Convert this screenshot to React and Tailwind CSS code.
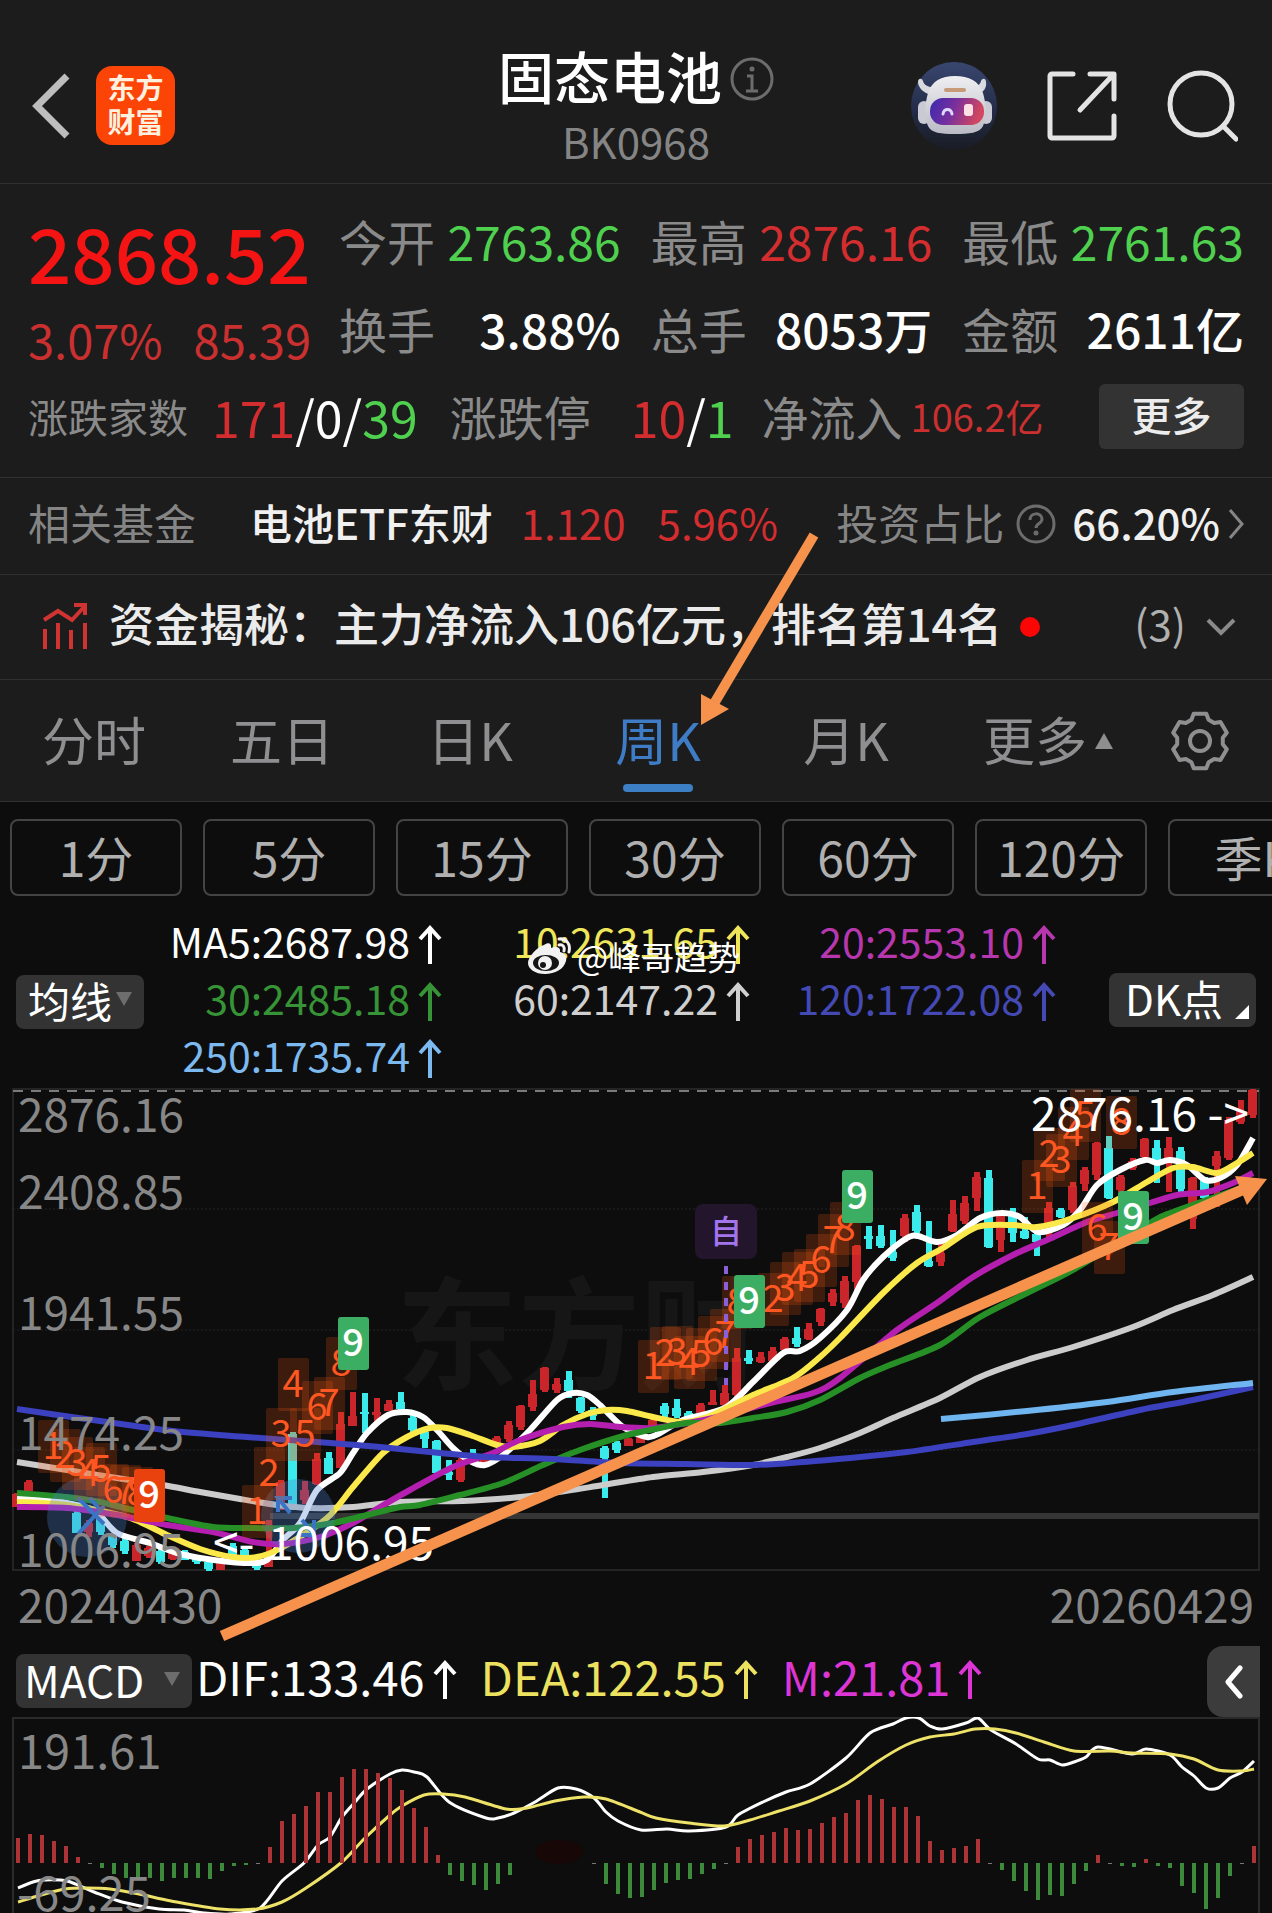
import React from "react";

const FONT = "font-['Noto_Sans_CJK_SC','Noto_Sans',sans-serif]";

/* ---------- helpers ---------- */

// Smooth curve through a flat list of x, y values.
function curve(v) {
  const p = [];
  for (let i = 0; i < v.length; i += 2) p.push([v[i], v[i + 1]]);
  let d = `M${p[0][0]} ${p[0][1]}`;
  for (let i = 0; i < p.length - 1; i++) {
    const a = p[i - 1] || p[i];
    const b = p[i];
    const c = p[i + 1];
    const e = p[i + 2] || c;
    const f = (n) => n.toFixed(1);
    d += `C${f(b[0] + (c[0] - a[0]) / 7)} ${f(b[1] + (c[1] - a[1]) / 7)} ${f(c[0] - (e[0] - b[0]) / 7)} ${f(c[1] - (e[1] - b[1]) / 7)} ${c[0]} ${c[1]}`;
  }
  return d;
}

/* ---------- data ---------- */

// [x, wick top, body top, body bottom, wick bottom, rising]
const CANDLES = [
  [17, 1493, 1494, 1507, 1507, 1], [29, 1480, 1482, 1491, 1491, 1], [53, 1500, 1502, 1506, 1506, 0],
  [77, 1511, 1513, 1533, 1533, 0], [89, 1520, 1523, 1532, 1537, 1], [101, 1516, 1519, 1532, 1535, 0],
  [113, 1535, 1535, 1545, 1548, 0], [125, 1538, 1541, 1551, 1554, 0], [137, 1543, 1545, 1561, 1561, 1],
  [149, 1546, 1548, 1556, 1558, 1], [161, 1548, 1551, 1562, 1564, 0], [173, 1551, 1552, 1559, 1560, 1],
  [185, 1550, 1552, 1560, 1560, 0], [197, 1555, 1556, 1562, 1564, 0], [209, 1560, 1562, 1569, 1571, 0],
  [221, 1560, 1562, 1570, 1570, 1], [233, 1543, 1546, 1557, 1557, 0], [245, 1549, 1550, 1557, 1557, 0],
  [257, 1560, 1561, 1568, 1570, 0], [269, 1520, 1555, 1567, 1567, 1], [281, 1480, 1482, 1510, 1510, 1],
  [293, 1432, 1434, 1510, 1510, 0], [305, 1481, 1490, 1500, 1504, 1], [317, 1453, 1459, 1484, 1485, 1],
  [329, 1452, 1458, 1474, 1474, 0], [341, 1412, 1424, 1468, 1468, 1], [353, 1392, 1416, 1426, 1426, 1],
  [365, 1393, 1412, 1414, 1433, 0], [377, 1398, 1412, 1415, 1425, 1], [389, 1400, 1404, 1411, 1411, 1],
  [401, 1392, 1402, 1409, 1410, 0], [413, 1415, 1418, 1430, 1434, 0], [425, 1430, 1432, 1439, 1448, 0],
  [437, 1440, 1441, 1473, 1473, 0], [449, 1460, 1472, 1475, 1480, 0], [461, 1458, 1460, 1480, 1482, 1],
  [473, 1449, 1453, 1460, 1462, 0], [485, 1455, 1457, 1462, 1464, 1], [497, 1436, 1438, 1446, 1447, 1],
  [509, 1421, 1425, 1439, 1442, 1], [521, 1405, 1406, 1427, 1430, 1], [533, 1380, 1394, 1407, 1411, 1],
  [545, 1367, 1368, 1390, 1392, 1], [557, 1378, 1384, 1390, 1393, 1], [569, 1371, 1380, 1391, 1398, 0],
  [581, 1397, 1398, 1411, 1413, 0], [593, 1407, 1410, 1416, 1420, 0], [605, 1446, 1448, 1458, 1498, 0],
  [617, 1441, 1443, 1450, 1453, 0], [629, 1438, 1439, 1446, 1446, 1], [641, 1436, 1437, 1443, 1443, 1],
  [653, 1419, 1420, 1430, 1430, 1], [665, 1403, 1406, 1414, 1417, 0], [677, 1399, 1408, 1416, 1418, 0],
  [689, 1411, 1413, 1418, 1418, 0], [701, 1403, 1405, 1413, 1413, 1], [713, 1390, 1402, 1405, 1405, 1],
  [725, 1385, 1393, 1405, 1407, 1], [737, 1348, 1358, 1395, 1397, 1], [749, 1350, 1358, 1361, 1364, 0],
  [761, 1352, 1357, 1362, 1363, 1], [773, 1347, 1351, 1361, 1362, 1], [785, 1337, 1339, 1350, 1352, 1],
  [797, 1327, 1338, 1344, 1347, 0], [809, 1323, 1329, 1339, 1340, 1], [821, 1308, 1309, 1322, 1326, 1],
  [833, 1289, 1293, 1302, 1306, 1], [845, 1276, 1281, 1303, 1308, 1], [857, 1245, 1246, 1282, 1292, 1],
  [869, 1226, 1236, 1239, 1249, 0], [881, 1225, 1236, 1246, 1248, 0], [893, 1230, 1252, 1258, 1261, 0],
  [905, 1214, 1218, 1236, 1242, 1], [917, 1205, 1212, 1231, 1233, 0], [929, 1221, 1261, 1266, 1267, 0],
  [941, 1242, 1253, 1262, 1266, 1], [953, 1200, 1214, 1231, 1232, 1], [965, 1196, 1203, 1221, 1224, 1],
  [977, 1172, 1177, 1198, 1211, 1], [989, 1170, 1178, 1247, 1248, 0], [1001, 1213, 1216, 1240, 1252, 1],
  [1013, 1208, 1214, 1233, 1242, 0], [1025, 1217, 1231, 1238, 1239, 0], [1037, 1230, 1234, 1242, 1256, 0],
  [1049, 1202, 1208, 1233, 1239, 1], [1061, 1208, 1210, 1217, 1218, 0], [1073, 1182, 1186, 1210, 1213, 1],
  [1085, 1167, 1170, 1184, 1191, 1], [1097, 1142, 1143, 1175, 1180, 1], [1109, 1136, 1148, 1198, 1199, 0],
  [1121, 1175, 1177, 1190, 1192, 1], [1133, 1158, 1161, 1168, 1170, 1], [1145, 1138, 1139, 1157, 1158, 1],
  [1157, 1140, 1148, 1160, 1183, 0], [1169, 1137, 1148, 1162, 1192, 1], [1181, 1147, 1151, 1189, 1192, 0],
  [1193, 1177, 1178, 1219, 1229, 1], [1205, 1177, 1180, 1198, 1200, 0], [1217, 1151, 1156, 1166, 1207, 1],
  [1229, 1117, 1120, 1158, 1160, 1], [1241, 1100, 1111, 1122, 1124, 1], [1253, 1089, 1090, 1115, 1118, 1],
];

const MA_LINES = [
  ["#cccccc", [17, 1462, 67, 1470, 117, 1478, 163, 1485, 200, 1492, 240, 1499, 277, 1505, 310, 1508, 353, 1507, 400, 1502, 463, 1501, 510, 1498, 553, 1493, 603, 1485, 653, 1477, 703, 1472, 753, 1465, 787, 1457, 820, 1448, 860, 1433, 893, 1418, 940, 1398, 980, 1377, 1027, 1360, 1073, 1347, 1133, 1327, 1173, 1310, 1213, 1295, 1253, 1277]],
  ["#ffffff", [17, 1498, 50, 1500, 93, 1510, 117, 1533, 150, 1543, 177, 1553, 207, 1559, 247, 1563, 267, 1560, 283, 1540, 300, 1523, 317, 1490, 340, 1473, 353, 1453, 367, 1433, 388, 1415, 407, 1412, 423, 1417, 437, 1430, 453, 1448, 470, 1461, 485, 1465, 503, 1455, 530, 1430, 557, 1400, 573, 1393, 587, 1395, 600, 1405, 623, 1427, 647, 1437, 660, 1433, 683, 1420, 725, 1408, 753, 1382, 783, 1353, 800, 1351, 820, 1338, 847, 1310, 863, 1280, 883, 1257, 907, 1238, 918, 1236, 937, 1242, 957, 1235, 980, 1218, 1002, 1213, 1020, 1217, 1038, 1232, 1063, 1225, 1080, 1210, 1097, 1185, 1120, 1170, 1145, 1160, 1157, 1163, 1170, 1160, 1187, 1165, 1205, 1180, 1220, 1178, 1237, 1165, 1253, 1138]],
  ["#fbe94b", [17, 1502, 67, 1505, 127, 1517, 167, 1535, 200, 1549, 233, 1557, 257, 1557, 283, 1547, 327, 1518, 353, 1487, 383, 1453, 407, 1437, 430, 1428, 447, 1428, 470, 1435, 497, 1445, 513, 1447, 540, 1441, 563, 1425, 587, 1414, 607, 1410, 627, 1411, 653, 1417, 683, 1422, 707, 1417, 727, 1408, 753, 1395, 793, 1378, 820, 1357, 840, 1338, 883, 1293, 917, 1263, 943, 1248, 977, 1227, 1013, 1225, 1037, 1227, 1073, 1218, 1113, 1202, 1147, 1182, 1173, 1168, 1193, 1167, 1217, 1173, 1237, 1163, 1253, 1153]],
  ["#b51fb0", [17, 1507, 67, 1508, 117, 1515, 167, 1525, 213, 1532, 253, 1542, 283, 1544, 320, 1537, 353, 1523, 380, 1507, 410, 1490, 453, 1467, 493, 1453, 520, 1440, 563, 1427, 590, 1424, 620, 1427, 653, 1428, 687, 1423, 713, 1418, 770, 1403, 813, 1393, 840, 1378, 897, 1330, 937, 1303, 973, 1277, 1013, 1255, 1047, 1240, 1087, 1222, 1117, 1213, 1150, 1203, 1177, 1195, 1207, 1192, 1233, 1183, 1253, 1173]],
  ["#269026", [17, 1493, 67, 1497, 100, 1502, 133, 1510, 167, 1518, 213, 1527, 253, 1528, 293, 1528, 333, 1523, 367, 1515, 400, 1507, 420, 1505, 460, 1495, 503, 1483, 543, 1465, 580, 1450, 627, 1435, 660, 1428, 687, 1423, 720, 1423, 753, 1418, 787, 1412, 820, 1400, 860, 1378, 890, 1365, 940, 1345, 980, 1317, 1027, 1293, 1073, 1270, 1150, 1223, 1173, 1212, 1250, 1185]],
  ["#3b41bf", [17, 1409, 100, 1421, 173, 1431, 247, 1437, 317, 1442, 380, 1447, 440, 1453, 487, 1457, 553, 1459, 620, 1463, 687, 1464, 753, 1465, 803, 1462, 860, 1457, 907, 1452, 973, 1442, 1027, 1434, 1073, 1425, 1140, 1410, 1193, 1400, 1253, 1387]],
  ["#6fb5ef", [941, 1419, 1027, 1411, 1107, 1402, 1173, 1392, 1253, 1383]],
];

// Sequence counters: [digit, x, y]
const COUNTS = [
  [1, 53, 1446], [2, 65, 1455], [3, 77, 1463], [4, 89, 1473], [5, 101, 1469], [6, 113, 1490], [7, 125, 1491], [8, 137, 1493],
  [1, 257, 1511], [2, 269, 1473], [3, 281, 1434], [4, 293, 1384], [5, 305, 1434], [6, 317, 1407], [7, 329, 1403], [8, 341, 1363],
  [1, 653, 1366], [2, 665, 1353], [3, 677, 1352], [4, 689, 1362], [5, 701, 1354], [6, 713, 1342], [7, 725, 1335], [8, 737, 1302],
  [2, 773, 1299], [3, 785, 1288], [4, 797, 1278], [5, 809, 1275], [6, 821, 1260], [7, 833, 1240], [8, 845, 1228],
  [1, 1037, 1186], [2, 1049, 1154], [3, 1061, 1160], [4, 1073, 1133], [5, 1085, 1115], [6, 1097, 1228], [7, 1109, 1247], [8, 1121, 1122],
];
const NINES = [
  [149, 1496, "#e9420f"], [353, 1344, "#3cae63"], [749, 1302, "#3cae63"], [857, 1197, "#3cae63"], [1133, 1218, "#3cae63"],
];

const MACD_BARS = [
  25, 29, 28, 22, 17, 6, -1, -5, -11, -15, -16, -15, -18, -15, -15, -15, -16, -8, -3, -2, -1,
  16, 42, 49, 57, 71, 71, 86, 94, 94, 90, 85, 73, 55, 36, 8, -12, -18, -22, -27, -21, -12,
  0, 0, 0, 0, 0, 0, -1, -21, -31, -35, -34, -27, -20, -17, -16, -11, -6, -1,
  16, 24, 28, 31, 35, 33, 34, 40, 46, 50, 63, 68, 64, 56, 56, 47, 22, 13, 15, 17, 24,
  -1, -7, -18, -28, -37, -32, -33, -21, -8, 8, -1, -3, -4, 4, -3, -5, -23, -30, -46, -35, -13, -1, 17,
];
const DIF = [18, 1888, 33, 1882, 43, 1880, 67, 1881, 94, 1892, 122, 1902, 159, 1909, 184, 1910, 204, 1913, 230, 1914, 260, 1908, 282, 1881, 304, 1863, 318, 1845, 330, 1837, 342, 1817, 355, 1802, 367, 1789, 390, 1774, 402, 1770, 414, 1772, 427, 1777, 449, 1802, 486, 1818, 498, 1818, 514, 1813, 535, 1802, 558, 1788, 576, 1789, 594, 1798, 606, 1812, 618, 1821, 641, 1830, 667, 1829, 689, 1831, 726, 1827, 738, 1815, 763, 1802, 786, 1792, 810, 1784, 846, 1758, 870, 1733, 893, 1724, 906, 1718, 919, 1718, 930, 1726, 942, 1729, 966, 1723, 978, 1718, 991, 1730, 1016, 1744, 1038, 1759, 1050, 1760, 1062, 1765, 1074, 1762, 1086, 1757, 1098, 1747, 1132, 1754, 1146, 1749, 1170, 1755, 1182, 1767, 1194, 1776, 1206, 1788, 1218, 1788, 1230, 1778, 1242, 1772, 1254, 1761];
const DEA = [18, 1902, 41, 1895, 65, 1889, 86, 1888, 110, 1889, 139, 1894, 171, 1901, 220, 1909, 257, 1909, 282, 1902, 306, 1888, 342, 1862, 365, 1838, 390, 1815, 402, 1806, 424, 1795, 443, 1794, 465, 1797, 506, 1809, 527, 1808, 555, 1801, 584, 1797, 606, 1799, 640, 1812, 656, 1818, 689, 1823, 724, 1826, 750, 1820, 779, 1811, 810, 1801, 846, 1784, 877, 1762, 906, 1745, 930, 1737, 954, 1734, 975, 1729, 995, 1729, 1016, 1733, 1044, 1742, 1074, 1751, 1110, 1751, 1132, 1753, 1170, 1754, 1194, 1759, 1218, 1770, 1242, 1771, 1254, 1769];

/* ---------- icons ---------- */

function Robot() {
  return (
    <svg viewBox="0 0 88 90" className="h-[90px] w-[88px]" aria-hidden="true">
      <defs>
        <linearGradient id="sky" x1="0" y1="0" x2="0" y2="1">
          <stop offset="0" stopColor="#39466f" />
          <stop offset="0.55" stopColor="#232c48" />
          <stop offset="1" stopColor="#1a1c24" />
        </linearGradient>
        <linearGradient id="shell" x1="0" y1="0" x2="0" y2="1">
          <stop offset="0" stopColor="#efeff2" />
          <stop offset="1" stopColor="#b9bac4" />
        </linearGradient>
        <linearGradient id="visor" x1="0" y1="0" x2="1" y2="0.2">
          <stop offset="0" stopColor="#3a2bb0" />
          <stop offset="0.5" stopColor="#7a2f9c" />
          <stop offset="1" stopColor="#d2475f" />
        </linearGradient>
      </defs>
      <ellipse cx="44" cy="45" rx="43" ry="44" fill="url(#sky)" />
      <path d="M21 34C13 32 8 26 8 21c0-4 4-4 5-1 1 4 5 6 10 6zM66 34c8-2 11-8 10-13 0-4-4-4-5-1-1 4-5 6-9 6z" fill="#d9dae0" />
      <rect x="8" y="40" width="12" height="23" rx="6" fill="#c9cad3" />
      <rect x="70" y="40" width="12" height="23" rx="6" fill="#c9cad3" />
      <path d="M45 15c14 0 24 5 28 17 3 10 4 24 0 33-3 7-14 8-28 8s-24-1-27-8c-4-9-3-23 0-33 4-12 13-17 27-17z" fill="url(#shell)" />
      <rect x="34" y="27" width="22" height="4" rx="2" fill="#c79a78" />
      <rect x="20" y="37" width="54" height="27" rx="13" fill="url(#visor)" />
      <path d="M33 53c1-6 8-6 9 0" fill="none" stroke="#ded7ff" strokeWidth="3" strokeLinecap="round" />
      <rect x="54" y="43" width="9" height="12" rx="3" fill="#ffdfe6" />
    </svg>
  );
}

function Gear() {
  const pts = [];
  for (let i = 0; i < 6; i++) {
    [[-22, 23], [-13, 28], [13, 28], [22, 23]].forEach(([a, r]) => {
      const t = ((i * 60 + a) * Math.PI) / 180;
      pts.push(`${(31 + r * Math.sin(t)).toFixed(1)},${(31 - r * Math.cos(t)).toFixed(1)}`);
    });
  }
  return (
    <svg viewBox="0 0 62 62" className="size-[62px]" fill="none" stroke="#8f8f91" strokeWidth="4" strokeLinejoin="round" aria-hidden="true">
      <polygon points={pts.join(" ")} />
      <circle cx="31" cy="31" r="10" />
    </svg>
  );
}

function UpArrow() {
  return (
    <svg viewBox="0 0 24 40" className="mt-2 h-[40px] w-[24px] shrink-0" fill="none" stroke="currentColor" strokeWidth="4" role="img" aria-label="↑">
      <path d="M12 39V3M2 14L12 3l10 11" />
    </svg>
  );
}

function Weibo() {
  return (
    <svg viewBox="0 0 46 40" className="h-[40px] w-[46px]" aria-hidden="true">
      <path d="M17 9c4-3 8-2 7 3 5-2 10-1 9 4 5 1 7 5 6 9-2 8-11 13-21 13C8 38 1 33 1 27 1 21 10 11 17 9z" fill="#f2f2f2" />
      <ellipse cx="19" cy="27" rx="13" ry="8" fill="#151515" />
      <circle cx="18" cy="27" r="7" fill="#f2f2f2" />
      <circle cx="16" cy="29" r="3" fill="#151515" />
      <path d="M32 3c7-1 12 5 10 13M32 9c4-1 6 2 5 6" fill="none" stroke="#f2f2f2" strokeWidth="3" strokeLinecap="round" />
    </svg>
  );
}

function DownTriangle({ className = "" }) {
  return (
    <svg viewBox="0 0 16 14" className={`h-[14px] w-4 ${className}`} aria-hidden="true">
      <path d="M0 0h16L8 14z" fill="#6d6d6d" />
    </svg>
  );
}

/* ---------- sections ---------- */

function Header() {
  return (
    <header className="grid h-[184px] grid-cols-3 items-center border-b border-[#303030] pt-7">
      <div className="flex items-center gap-[26px] pl-[30px]">
        <button aria-label="返回">
          <svg viewBox="0 0 40 66" className="h-[66px] w-[40px]" fill="none" stroke="#bdbdbd" strokeWidth="7" aria-hidden="true">
            <path d="M37 3L7 33l30 30" />
          </svg>
        </button>
        <div className="flex size-[79px] flex-col items-center justify-center rounded-2xl bg-[#fd4407] pb-1 text-[28px] font-bold leading-[34px] text-[#fff1e0]">
          <span>东方</span>
          <span>财富</span>
        </div>
      </div>
      <div className="flex flex-col items-center pt-1">
        <div className="flex items-center gap-2">
          <h1 className="text-[56px] font-medium leading-[66px] text-white">固态电池</h1>
          <button aria-label="说明" className="pt-2">
            <svg viewBox="0 0 44 44" className="size-[44px]" fill="none" stroke="#6c6c6c" strokeWidth="3" aria-hidden="true">
              <circle cx="22" cy="22" r="20" />
              <path d="M17 19h5v15M16 34h12" />
              <circle cx="22" cy="12" r="1" fill="#6c6c6c" />
            </svg>
          </button>
        </div>
        <p className="text-[42px] leading-[66px] text-[#858585]">BK0968</p>
      </div>
      <div className="flex items-center justify-end gap-[48px] pr-[34px]">
        <button aria-label="智能助手">
          <Robot />
        </button>
        <button aria-label="分享">
          <svg viewBox="0 0 72 72" className="size-[72px]" fill="none" stroke="#e4e4e4" strokeWidth="5" strokeLinecap="round" strokeLinejoin="round" aria-hidden="true">
            <path d="M27 4H6a2 2 0 0 0-2 2v60a2 2 0 0 0 2 2h60a2 2 0 0 0 2-2V46M44 4h24v25M66 6L34 40" />
          </svg>
        </button>
        <button aria-label="搜索">
          <svg viewBox="0 0 72 72" className="size-[72px]" fill="none" stroke="#e4e4e4" strokeWidth="5" strokeLinecap="round" aria-hidden="true">
            <circle cx="35" cy="34" r="31" />
            <path d="M57 56l13 13" />
          </svg>
        </button>
      </div>
    </header>
  );
}

const STATS = [
  ["今开", "2763.86", "text-[48px] text-[#4fd04f]"],
  ["最高", "2876.16", "text-[48px] text-[#d42d2f]"],
  ["最低", "2761.63", "text-[48px] text-[#4fd04f]"],
  ["换手", "3.88%", "text-[48px] font-medium text-white"],
  ["总手", "8053万", "text-[48px] font-medium text-white"],
  ["金额", "2611亿", "text-[48px] font-medium text-white"],
];

function Quote() {
  return (
    <section className="border-b border-[#303030] px-7 pb-[17px] pt-3">
      <div className="flex">
        <div className="w-[311px] shrink-0">
          <div className="text-[76px] font-medium leading-[110px] text-[#f41414]">2868.52</div>
          <div className="flex justify-between pr-7 text-[47px] leading-[66px] text-[#c9302f]">
            <span>3.07%</span>
            <span>85.39</span>
          </div>
        </div>
        <dl className="grid flex-1 grid-cols-3 gap-x-[30px]">
          {STATS.map(([k, v, c]) => (
            <div key={k} className="flex justify-between leading-[88px]">
              <dt className="text-[48px] text-[#8a8a8a]">{k}</dt>
              <dd className={c}>{v}</dd>
            </div>
          ))}
        </dl>
      </div>
      <div className="flex items-center leading-[88px]">
        <span className="text-[40px] text-[#8a8a8a]">涨跌家数</span>
        <span className="ml-6 text-[50px] text-white">
          <span className="text-[#d42d2f]">171</span>/0/<span className="text-[#4fd04f]">39</span>
        </span>
        <span className="ml-8 text-[47px] text-[#8a8a8a]">涨跌停</span>
        <span className="ml-10 text-[50px] text-white">
          <span className="text-[#d42d2f]">10</span>/<span className="text-[#4fd04f]">1</span>
        </span>
        <span className="ml-7 text-[47px] text-[#8a8a8a]">净流入</span>
        <span className="ml-2 text-[38px] text-[#c9302f]">106.2亿</span>
        <button className="ml-auto h-[65px] w-[145px] rounded-md bg-[#333333] pb-1 text-[40px] font-medium leading-[60px] text-[#ececec]">更多</button>
      </div>
    </section>
  );
}

function Fund() {
  return (
    <a href="#fund" className="flex h-[97px] items-center border-b border-[#303030] px-7 pb-2 text-[42px] leading-[60px] text-[#f0f0f0]">
      <span className="text-[#858585]">相关基金</span>
      <span className="ml-[54px] font-medium">电池ETF东财</span>
      <span className="ml-7 text-[#d42d2f]">1.120</span>
      <span className="ml-8 text-[#d42d2f]">5.96%</span>
      <span className="ml-auto text-[#858585]">投资占比</span>
      <svg viewBox="0 0 40 40" className="ml-3 mt-1 size-[40px]" fill="none" stroke="#6c6c6c" strokeWidth="3" aria-hidden="true">
        <circle cx="20" cy="20" r="18" />
        <path d="M14 16c0-8 12-8 12-1 0 5-6 4-6 9" />
        <circle cx="20" cy="29" r="1" fill="#6c6c6c" />
      </svg>
      <span className="ml-4 font-medium">66.20%</span>
      <svg viewBox="0 0 16 32" className="ml-2 mt-1 h-8 w-4" fill="none" stroke="#858585" strokeWidth="3" aria-hidden="true">
        <path d="M2 2l12 14L2 30" />
      </svg>
    </a>
  );
}

function News() {
  return (
    <div className="flex h-[105px] items-center border-b border-[#303030] pb-2 pl-[42px] pr-9 leading-[64px]">
      <svg viewBox="0 0 46 50" className="mt-2 h-[50px] w-[46px]" fill="none" stroke="#cf3433" strokeWidth="4" aria-hidden="true">
        <path d="M2 18l14-9 14 9L42 5M32 3h11v10" />
        <path d="M3 27v20M16 21v26M29 28v19M43 21v26" />
      </svg>
      <a href="#news" className="ml-[21px] text-[45px] font-medium text-[#ebebeb]">资金揭秘：主力净流入106亿元，排名第14名</a>
      <span className="ml-[18px] mt-2 size-5 rounded-full bg-[#fb0505]" />
      <button className="ml-auto flex items-center gap-5 text-[42px] text-[#b0b0b0]">
        (3)
        <svg viewBox="0 0 30 18" className="mt-2 h-[18px] w-[30px]" fill="none" stroke="#8a8a8a" strokeWidth="4" aria-hidden="true">
          <path d="M2 2l13 13L28 2" />
        </svg>
      </button>
    </div>
  );
}

const TABS = ["分时", "五日", "日K", "周K", "月K"];

function Tabs() {
  return (
    <nav className="grid h-[122px] grid-cols-[188fr_188fr_188fr_188fr_188fr_216fr_116fr] border-b border-[#303030] text-[52px] leading-[80px] text-[#8f8f91]">
      {TABS.map((t) =>
        t === "周K" ? (
          <button key={t} aria-current="true" className="relative pb-1 text-[#3f7cc6]">
            {t}
            <span className="absolute bottom-[9px] left-1/2 h-2 w-[70px] -translate-x-1/2 rounded-full bg-[#3c7fc4]" />
          </button>
        ) : (
          <button key={t} className="pb-1">
            {t}
          </button>
        )
      )}
      <button className="flex items-center justify-center gap-2 pb-1">
        更多
        <svg viewBox="0 0 18 16" className="mt-1 h-4 w-[18px]" aria-hidden="true">
          <path d="M9 0l9 16H0z" fill="#8f8f91" />
        </svg>
      </button>
      <button aria-label="设置" className="flex items-center justify-center pr-7">
        <Gear />
      </button>
    </nav>
  );
}

function Periods() {
  return (
    <div className="flex gap-[21px] overflow-hidden pl-[10px] pt-[17px]">
      {["1分", "5分", "15分", "30分", "60分", "120分", "季K"].map((p) => (
        <button key={p} className="h-[77px] w-[172px] shrink-0 rounded-lg border-2 border-[#444444] pb-1 text-[48px] leading-[64px] text-[#b0b0b0]">
          {p}
        </button>
      ))}
    </div>
  );
}

const LEGEND = [
  ["MA5:2687.98", "text-white"],
  ["10:2631.65", "text-[#efe65a]"],
  ["20:2553.10", "text-[#b637ae]"],
  ["30:2485.18", "text-[#369336]"],
  ["60:2147.22", "text-[#cfcfcf]"],
  ["120:1722.08", "text-[#4449b4]"],
  ["250:1735.74", "text-[#7cb9ee]"],
];

function Legend() {
  return (
    <div className="relative flex items-center pb-px pl-4 pr-4 pt-4 text-[42px]">
      <div className="relative mt-1 w-[128px] shrink-0">
        <select aria-label="主图指标" className="h-[54px] w-full appearance-none rounded-lg bg-[#333333] pb-1 pl-3 leading-[50px] text-white">
          <option>均线</option>
        </select>
        <DownTriangle className="pointer-events-none absolute right-3 top-6" />
      </div>
      <div className="grid flex-1 grid-cols-[298fr_308fr_306fr] text-[41px] leading-[57px]">
        {LEGEND.map(([t, c]) => (
          <div key={t} className={`flex items-center justify-end gap-2 whitespace-nowrap ${c}`}>
            {t}
            <UpArrow />
          </div>
        ))}
      </div>
      <button className="relative ml-[53px] mt-1 h-[54px] w-[147px] shrink-0 rounded-lg bg-[#333333] pb-1 pl-4 text-left leading-[50px] text-white">
        DK点
        <svg viewBox="0 0 14 14" className="absolute bottom-2 right-[7px] size-[14px]" aria-hidden="true">
          <path d="M14 0v14H0z" fill="#fff" />
        </svg>
      </button>
      <div className="absolute left-[527px] top-[38px] flex items-center gap-1 text-[33px] leading-[44px] text-white">
        <Weibo />
        @峰哥趋势
      </div>
    </div>
  );
}

function Chart() {
  return (
    <svg viewBox="0 1084 1272 562" className={`block h-auto w-full ${FONT}`} role="img" aria-label="周K线图">
      <g stroke="#242424" strokeWidth="2" fill="none">
        <rect x="13" y="1089" width="1246" height="481" />
        <path d="M13 1209H1259M13 1330H1259M13 1450H1259" strokeDasharray="2 2" strokeWidth="1" />
      </g>
      <path d="M13 1091H1259" stroke="#7a7a7a" strokeWidth="2" strokeDasharray="10 8" />
      <text x="396" y="1380" fontSize="122" fontWeight="700" fill="#161616">东方财</text>
      <rect x="270" y="1513" width="989" height="6" fill="#353535" />

      {CANDLES.map(([x, a, b, c, d, up]) => (
        <g key={x} fill={up ? "#c9252a" : "#3beaea"}>
          <rect x={x - 3} y={a} width="6" height={d - a} />
          <rect x={x - 5} y={b} width="9" height={c - b} />
        </g>
      ))}
      {MA_LINES.map(([c, v]) => (
        <path key={c} d={curve(v)} fill="none" stroke={c} strokeWidth="6" />
      ))}

      <g fill="#4a7fd0" fillOpacity="0.3">
        <circle cx="87" cy="1517" r="40" />
        <circle cx="298" cy="1516" r="37" />
      </g>
      <g stroke="#3c74c4" strokeWidth="4" fill="none">
        <path d="M78 1498l26 26M104 1506l-26 28M90 1498l12 14" />
        <path d="M292 1498h-14l12 15M278 1498v14M302 1520l12 14M314 1520v15h-14" />
      </g>

      {COUNTS.map(([n, x, y]) => (
        <rect key={x} x={x - 15} y={y - 26} width="31" height="53" rx="2" fill="#ff5a10" fillOpacity="0.2" />
      ))}
      <g fontSize="38" fill="#ff5722" textAnchor="middle">
        {COUNTS.map(([n, x, y]) => (
          <text key={x} x={x} y={y + 13}>{n}</text>
        ))}
      </g>
      <path d="M726 1266V1385" stroke="#8b5fd8" strokeWidth="4" strokeDasharray="8 8" />
      <rect x="695" y="1204" width="62" height="55" rx="8" fill="#23152c" />
      <text x="726" y="1243" fontSize="32" fontWeight="500" fill="#a274ee" textAnchor="middle">自</text>
      {NINES.map(([x, y, c]) => (
        <g key={x}>
          <rect x={x - 15} y={y - 27} width="31" height="53" rx="3" fill={c} />
          <text x={x} y={y + 12} fontSize="38" fontWeight="500" fill="#fff" textAnchor="middle">9</text>
        </g>
      ))}

      <g fontSize="46" fill="#878787">
        <text x="18" y="1132">2876.16</text>
        <text x="18" y="1209">2408.85</text>
        <text x="18" y="1330">1941.55</text>
        <text x="18" y="1450">1474.25</text>
        <text x="18" y="1567">1006.95</text>
        <text x="18" y="1623">20240430</text>
        <text x="1254" y="1623" textAnchor="end">20260429</text>
      </g>
      <g fontSize="46" fill="#ffffff">
        <text x="1031" y="1131">2876.16</text>
        <text x="1249" y="1131" textAnchor="end">-&gt;</text>
        <text x="213" y="1560">&lt;-</text>
        <text x="434" y="1560" textAnchor="end">1006.95</text>
      </g>

      <g fill="#f6924b">
        <path d="M222 1636L1242 1190" stroke="#f6924b" strokeWidth="11" />
        <path d="M1267 1179L1235 1176L1247 1205z" />
      </g>
    </svg>
  );
}

function MacdHeader() {
  return (
    <div className="flex h-[71px] items-center pl-4 pr-3 text-[47px] leading-[60px]">
      <div className="relative mb-2 w-[176px] shrink-0">
        <select aria-label="副图指标" className="h-[54px] w-full appearance-none rounded-lg bg-[#333333] pb-1 pl-2 text-[44px] leading-[50px] text-white">
          <option>MACD</option>
        </select>
        <DownTriangle className="pointer-events-none absolute right-3 top-6" />
      </div>
      <div className="flex items-center gap-6 pb-3 pl-1">
        <span className="flex items-center gap-2 text-white">DIF:133.46<UpArrow /></span>
        <span className="flex items-center gap-2 text-[#ece260]">DEA:122.55<UpArrow /></span>
        <span className="flex items-center gap-2 text-[#dd35d6]">M:21.81<UpArrow /></span>
      </div>
      <button aria-label="收起" className="ml-auto flex h-[71px] w-[53px] items-center justify-center rounded-l-2xl bg-[#3c3c3c]">
        <svg viewBox="0 0 20 34" className="h-[34px] w-5" fill="none" stroke="#fff" strokeWidth="5" strokeLinecap="round" strokeLinejoin="round" aria-hidden="true">
          <path d="M16 3L4 17l12 14" />
        </svg>
      </button>
    </div>
  );
}

function Macd() {
  return (
    <svg viewBox="0 1717 1272 196" className={`block h-auto w-full ${FONT}`} role="img" aria-label="MACD">
      <path d="M13 1913V1718H1259V1913" fill="none" stroke="#2a2a2a" strokeWidth="2" />
      <ellipse cx="559" cy="1852" rx="24" ry="12" fill="#180707" />
      <path d={curve(DIF)} fill="none" stroke="#fff" strokeWidth="3" />
      <path d={curve(DEA)} fill="none" stroke="#eee268" strokeWidth="3" />
      {MACD_BARS.map((v, i) =>
        v === 0 ? null : (
          <rect key={i} x={16 + i * 12} y={v > 0 ? 1863 - v : 1863} width="4" height={Math.abs(v)} fill={v > 0 ? "#ad3436" : v === -1 ? "#777777" : "#3d8a3d"} />
        )
      )}
      <g fontSize="47" fill="#878787">
        <text x="18" y="1769">191.61</text>
        <text x="17" y="1911">-69.25</text>
      </g>
    </svg>
  );
}

export default function App() {
  return (
    <main className={`relative overflow-hidden bg-[#0d0d0d] ${FONT}`}>
      <div className="relative bg-[#1c1c1c]">
        <Header />
        <Quote />
        <Fund />
        <News />
        <Tabs />
        <svg viewBox="0 0 130 200" className="pointer-events-none absolute left-[697px] top-[528px] h-[200px] w-[130px]" aria-hidden="true">
          <path d="M117 7L18 174" stroke="#f6924b" strokeWidth="10" />
          <path d="M4 197L4 166L32 181z" fill="#f6924b" />
        </svg>
      </div>
      <Periods />
      <Legend />
      <Chart />
      <MacdHeader />
      <Macd />
    </main>
  );
}
